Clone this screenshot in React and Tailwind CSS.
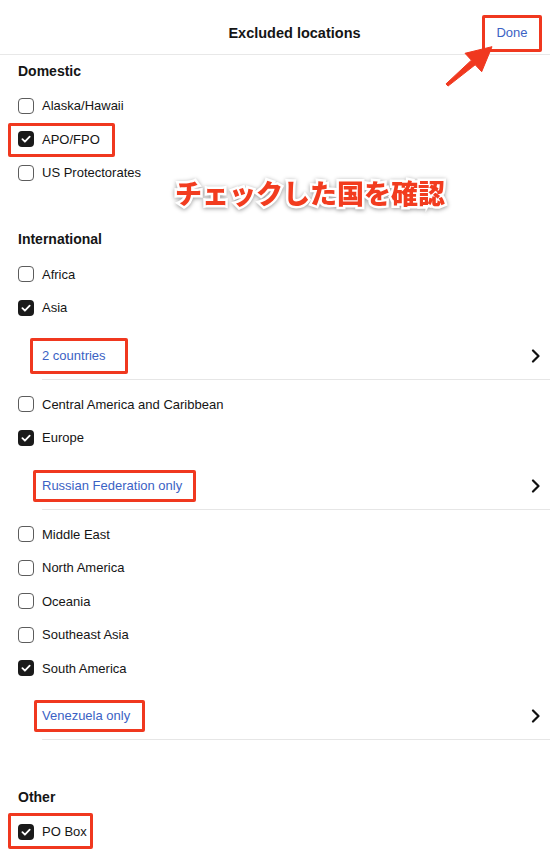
import React from 'react';

const Checkbox = ({ checked }) =>
  checked ? (
    <span className="flex h-4 w-4 shrink-0 items-center justify-center rounded-[4px] bg-[#1a1a1a]">
      <svg width="12" height="12" viewBox="0 0 12 12">
        <path
          d="M2.4 6.2 L4.9 8.7 L9.7 3.6"
          fill="none"
          stroke="#fff"
          strokeWidth="1.8"
          strokeLinecap="round"
          strokeLinejoin="round"
        />
      </svg>
    </span>
  ) : (
    <span className="h-4 w-4 shrink-0 rounded-[4px] border-[1.5px] border-[#5c5c5c] bg-white" />
  );

const Row = ({ label, checked, mark }) => (
  <div className="relative flex h-[33.5px] items-center gap-2 text-[13px] text-[#151515]">
    <Checkbox checked={checked} />
    <span>{label}</span>
    {mark}
  </div>
);

const Chevron = () => (
  <svg width="10" height="14" viewBox="0 0 10 14">
    <path
      d="M2 1.5 L7.5 7 L2 12.5"
      fill="none"
      stroke="#111"
      strokeWidth="2.2"
      strokeLinecap="round"
      strokeLinejoin="round"
    />
  </svg>
);

const Sub = ({ text, mark }) => (
  <div className="mt-2 ml-6 flex h-[47px] items-center justify-between border-b border-[#e6e6e6] pr-[9px]">
    <span className="relative text-[13px] text-[#3b62c4]">
      {text}
      {mark}
    </span>
    <Chevron />
  </div>
);

const Heading = ({ children, className = '' }) => (
  <h2 className={`flex items-center text-[14px] font-bold text-[#151515] ${className}`}>
    {children}
  </h2>
);

const App = () => {
  return (
    <div className="relative min-h-[850px] w-full overflow-hidden bg-white font-['Liberation_Sans',Arial,sans-serif]">
      <div className="flex h-[55px] items-start border-b border-[#e8e8e8]">
        <div className="flex h-full flex-1 items-center justify-center pl-[107px] pt-[13px] text-[14.5px] font-bold text-[#151515]">
          Excluded locations
        </div>
        <div className="mr-[8px] mt-[15px] flex h-[37px] w-[60px] items-center justify-center rounded-[2px] border-[3px] border-[#f0381f] pb-[2px] text-[13px] text-[#3b62c4]">
          Done
        </div>
      </div>

      <div className="pl-[18px]">
        <Heading className="h-[34px] pb-[2px]">Domestic</Heading>
        <Row label="Alaska/Hawaii" />
        <Row
          label="APO/FPO"
          checked
          mark={
            <span className="absolute left-[-10px] top-0 h-[34px] w-[107px] rounded-[2px] border-[3px] border-[#f0381f]" />
          }
        />
        <Row label="US Protectorates" />

        <Heading className="mt-8 h-[36px]">International</Heading>
        <Row label="Africa" />
        <Row label="Asia" checked />
        <Sub
          text="2 countries"
          mark={
            <span className="absolute left-[-12px] top-1/2 h-[36px] w-[98px] -translate-y-1/2 rounded-[2px] border-[3px] border-[#f0381f]" />
          }
        />
        <div className="mt-2">
          <Row label="Central America and Caribbean" />
          <Row label="Europe" checked />
        </div>
        <Sub
          text="Russian Federation only"
          mark={
            <span className="absolute left-[-9px] top-1/2 h-[32px] w-[163px] -translate-y-1/2 rounded-[2px] border-[3px] border-[#f0381f]" />
          }
        />
        <div className="mt-2">
          <Row label="Middle East" />
          <Row label="North America" />
          <Row label="Oceania" />
          <Row label="Southeast Asia" />
          <Row label="South America" checked />
        </div>
        <Sub
          text="Venezuela only"
          mark={
            <span className="absolute left-[-8px] top-1/2 h-[32px] w-[111px] -translate-y-1/2 rounded-[2px] border-[3px] border-[#f0381f]" />
          }
        />

        <Heading className="mt-[39px] h-[36px]">Other</Heading>
        <Row
          label="PO Box"
          checked
          mark={
            <span className="absolute left-[-10px] top-[-2px] h-[36px] w-[85px] rounded-[2px] border-[3px] border-[#f0381f]" />
          }
        />
      </div>

      <div className="pointer-events-none absolute left-[175px] top-[179px] font-['Noto_Sans_CJK_JP',sans-serif] text-[27px] font-black leading-none text-[#f23c1f] [-webkit-text-stroke:5px_white] [paint-order:stroke_fill] drop-shadow-[0_1px_2px_rgba(0,0,0,0.4)]">
        チェックした国を確認
      </div>

      <svg
        className="pointer-events-none absolute left-0 top-0"
        width="550"
        height="100"
        viewBox="0 0 550 100"
      >
        <polygon
          points="446,83.9 471.4,60.2 465,53.3 492,46.7 481.7,71.7 475.2,64.8 448,86.1"
          fill="#f0381f"
          stroke="#f0381f"
          strokeWidth="1"
          strokeLinejoin="round"
        />
      </svg>
    </div>
  );
};

export default App;
